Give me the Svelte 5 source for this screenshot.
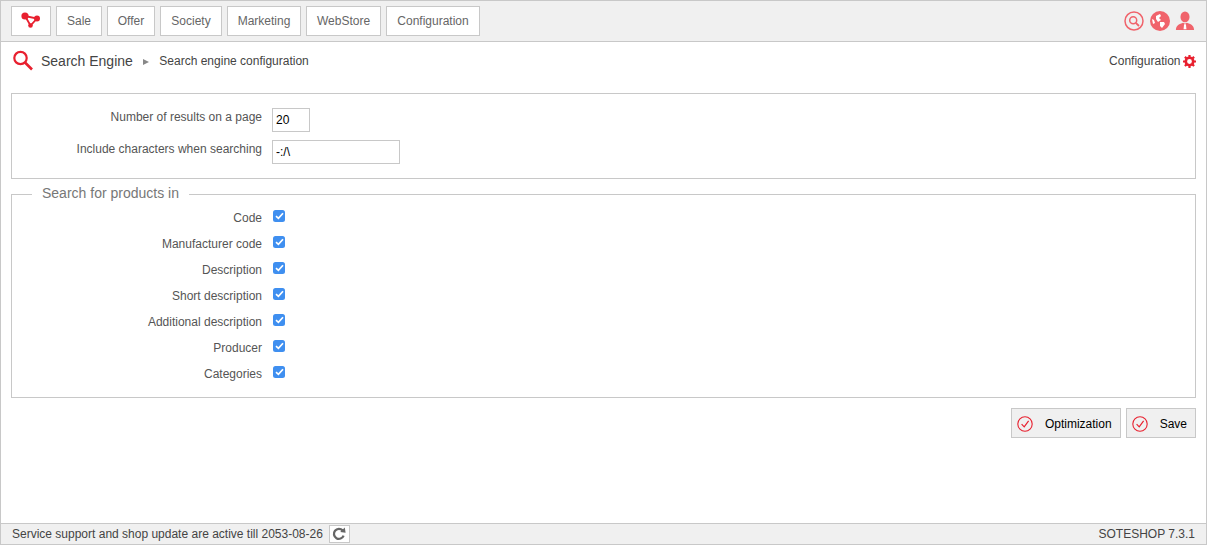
<script>
  const menu = [
    { label: "Sale", width: 46 },
    { label: "Offer", width: 48 },
    { label: "Society", width: 62 },
    { label: "Marketing", width: 74 },
    { label: "WebStore", width: 75 },
    { label: "Configuration", width: 94 },
  ];
  const fields = ["Code", "Manufacturer code", "Description", "Short description", "Additional description", "Producer", "Categories"];
</script>

<div class="page">
  <header class="top">
    <nav class="menu">
      <a class="tab logo" href="#home" aria-label="Home">
        <svg width="20" height="18" viewBox="0 0 20 18">
          <path d="M4 4 L16 6.5 L9.5 13.5 Z" fill="none" stroke="#e8202f" stroke-width="1.8" />
          <circle cx="4" cy="4" r="3.6" fill="#e8202f" />
          <circle cx="16" cy="6.5" r="3" fill="#e8202f" />
          <circle cx="9.5" cy="13.5" r="2.3" fill="#e8202f" />
        </svg>
      </a>
      {#each menu as m}
        <a class="tab" href="#menu" style="width:{m.width}px">{m.label}</a>
      {/each}
    </nav>
    <div class="tools">
      <svg width="20" height="20" viewBox="0 0 20 20">
        <circle cx="10" cy="10" r="9" fill="none" stroke="#f0636b" stroke-width="1.5" />
        <circle cx="9.2" cy="9.2" r="3.5" fill="none" stroke="#f0636b" stroke-width="1.5" />
        <path d="M11.8 11.8 L15 15" stroke="#f0636b" stroke-width="1.8" />
      </svg>
      <svg width="20" height="20" viewBox="0 0 20 20">
        <circle cx="10" cy="10" r="10" fill="#f0636b" />
        <path d="M6 5 L10 3 L11 5 L9 7 L11 9 L8 11 L6 8 Z M10 11 L14 11 L15 13 L12 17 L10 15 Z M2 8 L4 9 L5 12 L3 13 Z" fill="#fff" />
      </svg>
      <svg width="20" height="20" viewBox="0 0 22 22">
        <ellipse cx="11" cy="6.5" rx="5" ry="6" fill="#f0636b" />
        <path d="M1 21 C1 16 5 14 9 13 L11 14 L13 13 C17 14 21 16 21 21 Z" fill="#f0636b" />
        <path d="M10 14.5 H12 L12.6 20 H9.4 Z" fill="#fff" />
      </svg>
    </div>
  </header>

  <div class="crumbs">
    <svg class="lens" width="22" height="22" viewBox="0 0 22 22">
      <circle cx="8.5" cy="8" r="6.2" fill="none" stroke="#e8202f" stroke-width="2.2" />
      <path d="M13 12.5 L20 19.5" stroke="#e8202f" stroke-width="2.6" />
    </svg>
    <span class="title">Search Engine</span>
    <span class="arrow"></span>
    <span class="sub">Search engine configuration</span>
    <a class="config" href="#config">
      Configuration
      <svg width="13" height="13" viewBox="0 0 13 13">
        <circle cx="6.5" cy="6.5" r="3.7" fill="none" stroke="#e8202f" stroke-width="2.6" />
        <path d="M6.5 0 V13 M0 6.5 H13 M1.9 1.9 L11.1 11.1 M11.1 1.9 L1.9 11.1" stroke="#e8202f" stroke-width="2.2" stroke-dasharray="2.4 8.2 2.4" />
      </svg>
    </a>
  </div>

  <main class="content">
    <section class="box general">
      <div class="row first">
        <label for="per-page">Number of results on a page</label>
        <input id="per-page" class="small" value="20" />
      </div>
      <div class="row second">
        <label for="chars">Include characters when searching</label>
        <input id="chars" class="wide" value="-:/\" />
      </div>
    </section>

    <fieldset class="box products">
      <legend>Search for products in</legend>
      {#each fields as f}
        <div class="check">
          <span class="name">{f}</span>
          <span class="tick">
            <svg width="9" height="8" viewBox="0 0 9 8">
              <path d="M1 4.2 L3.4 6.4 L8 1.2" fill="none" stroke="#fff" stroke-width="1.7" />
            </svg>
          </span>
        </div>
      {/each}
    </fieldset>

    <div class="actions">
      <button>
        <svg width="16" height="16" viewBox="0 0 16 16">
          <circle cx="8" cy="8" r="7.2" fill="none" stroke="#e8202f" stroke-width="1.1" />
          <path d="M4.6 8.2 L7.2 10.8 L11.6 4.8" fill="none" stroke="#e8202f" stroke-width="1.2" />
        </svg>
        Optimization
      </button>
      <button>
        <svg width="16" height="16" viewBox="0 0 16 16">
          <circle cx="8" cy="8" r="7.2" fill="none" stroke="#e8202f" stroke-width="1.1" />
          <path d="M4.6 8.2 L7.2 10.8 L11.6 4.8" fill="none" stroke="#e8202f" stroke-width="1.2" />
        </svg>
        Save
      </button>
    </div>
  </main>

  <footer class="bottom">
    <span>Service support and shop update are active till 2053-08-26</span>
    <span class="refresh">
      <svg width="14" height="14" viewBox="0 0 14 14">
        <path d="M11.6 8.6 A5 5 0 1 1 10.6 3.4" fill="none" stroke="#666" stroke-width="2.3" />
        <path d="M8.2 5 L13.6 5.8 L12.8 .6 Z" fill="#666" />
      </svg>
    </span>
    <span class="version">SOTESHOP 7.3.1</span>
  </footer>
</div>

<style>
  :global(body) {
    margin: 0;
    background: #fff;
  }
  .page {
    box-sizing: border-box;
    height: 545px;
    display: flex;
    flex-direction: column;
    border: 1px solid #c8c8c8;
    border-bottom: 0;
    font-family: "Liberation Sans", Arial, sans-serif;
    font-size: 12px;
    color: #555;
  }
  .top {
    height: 41px;
    flex: none;
    box-sizing: border-box;
    display: flex;
    align-items: center;
    justify-content: space-between;
    padding: 0 10px;
    background: #f0f0f0;
    border-bottom: 1px solid #c8c8c8;
  }
  .menu {
    display: flex;
    gap: 5px;
  }
  .tab {
    box-sizing: border-box;
    height: 30px;
    display: flex;
    align-items: center;
    justify-content: center;
    background: #fff;
    border: 1px solid #c8c8c8;
    color: #666;
    text-decoration: none;
  }
  .logo {
    width: 40px;
  }
  .tools {
    display: flex;
    align-items: center;
    gap: 5.5px;
    margin-right: 1px;
  }
  .crumbs {
    height: 38px;
    flex: none;
    display: flex;
    align-items: center;
    padding: 0 10px 0 11px;
    color: #444;
  }
  .lens {
    margin-right: 7px;
  }
  .title {
    font-size: 14px;
  }
  .arrow {
    width: 0;
    height: 0;
    margin: 1px 10.5px 0 10px;
    border-left: 6px solid #888;
    border-top: 3.5px solid transparent;
    border-bottom: 3.5px solid transparent;
  }
  .config {
    margin-left: auto;
    display: flex;
    align-items: center;
    gap: 2.5px;
    color: #444;
    text-decoration: none;
  }
  .content {
    flex: 1;
    padding: 13px 10px 0;
  }
  .box {
    box-sizing: border-box;
    margin: 0;
    border: 1px solid #c8c8c8;
  }
  .general {
    height: 86px;
    padding-top: 14px;
  }
  .row {
    display: flex;
    align-items: flex-start;
  }
  .second {
    margin-top: 8px;
  }
  .row label {
    width: 250px;
    text-align: right;
    margin-right: 10px;
    line-height: 16px;
    margin-top: 1px;
  }
  input {
    box-sizing: border-box;
    height: 24px;
    padding: 2px 3px;
    border: 1px solid #c8c8c8;
    border-radius: 0;
    font: 12px "Liberation Sans", Arial, sans-serif;
    color: #000;
    background: #fff;
    outline: none;
  }
  .small {
    width: 38px;
  }
  .wide {
    width: 128px;
  }
  .products {
    margin-top: 7px;
    height: 212px;
    padding: 3px 0 0;
    min-width: 0;
  }
  legend {
    margin-left: 20px;
    padding: 0 10px 2px;
    font-size: 14px;
    line-height: 14px;
    color: #777;
  }
  .check {
    height: 26px;
    display: flex;
    align-items: center;
  }
  .name {
    width: 250px;
    text-align: right;
    margin-right: 11px;
  }
  .tick {
    width: 12px;
    height: 12px;
    margin-top: -5px;
    display: flex;
    align-items: center;
    justify-content: center;
    background: #3f8ff0;
    border-radius: 2.5px;
  }
  .actions {
    display: flex;
    justify-content: flex-end;
    gap: 5px;
    margin-top: 10px;
  }
  button {
    box-sizing: border-box;
    height: 30px;
    padding: 1px 8px 0 5px;
    display: flex;
    align-items: center;
    gap: 12px;
    background: #f0f0f0;
    border: 1px solid #c8c8c8;
    font: 12px "Liberation Sans", Arial, sans-serif;
    color: #000;
  }
  .bottom {
    height: 22px;
    flex: none;
    box-sizing: border-box;
    display: flex;
    align-items: center;
    padding: 0 11px;
    background: #f0f0f0;
    border-top: 1px solid #c8c8c8;
    border-bottom: 1px solid #c8c8c8;
    color: #444;
  }
  .refresh {
    box-sizing: border-box;
    width: 21px;
    height: 18px;
    margin-left: 6px;
    display: flex;
    align-items: center;
    justify-content: center;
    background: #fff;
    border: 1px solid #c8c8c8;
  }
  .version {
    margin-left: auto;
  }
</style>
